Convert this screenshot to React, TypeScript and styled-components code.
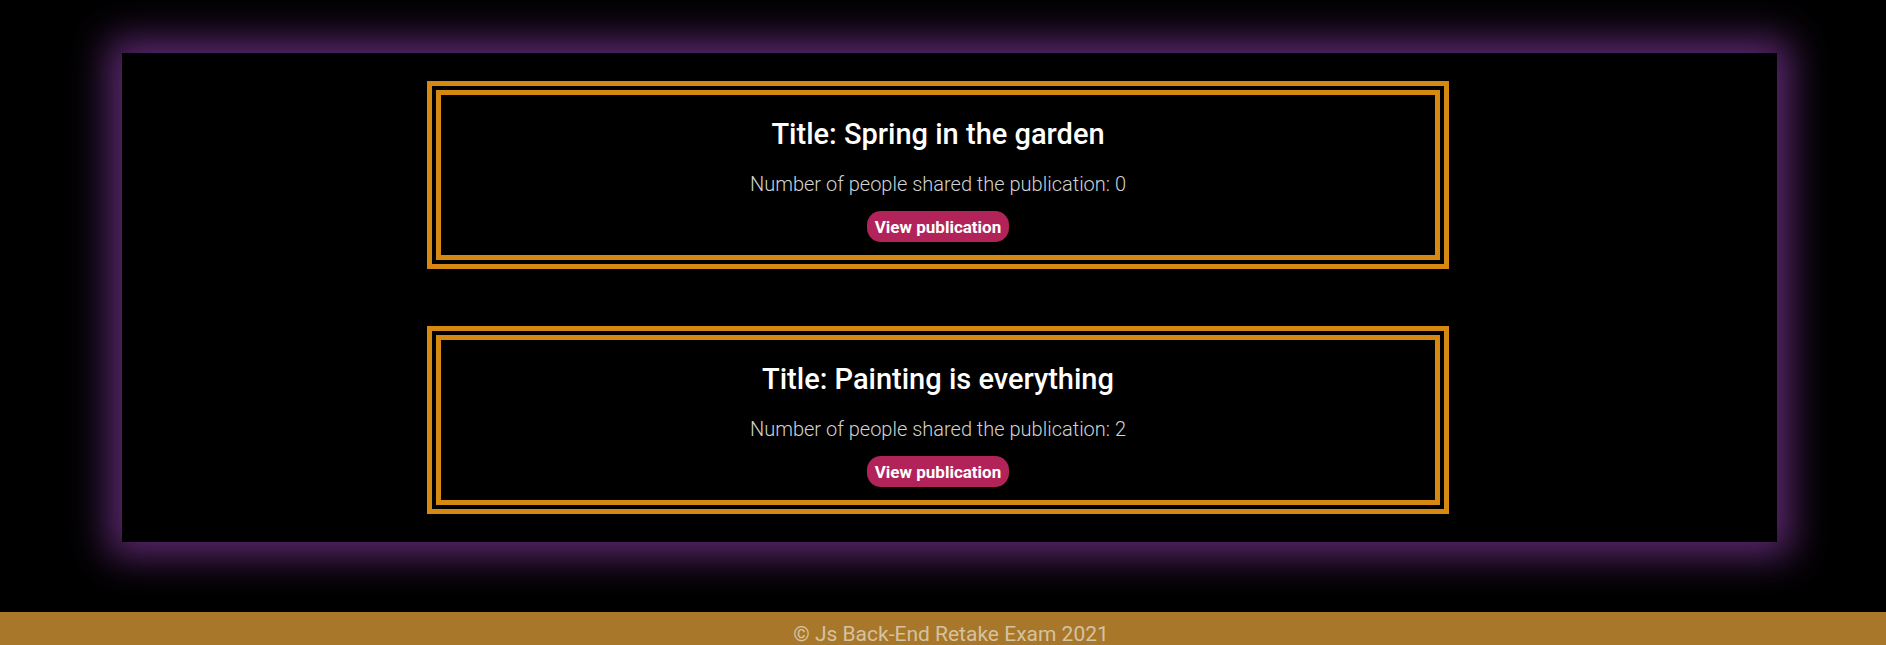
import { FC } from 'react'
import styled, { createGlobalStyle } from 'styled-components'

const publications = [
  { id: 1, title: 'Spring in the garden', shared: 0 },
  { id: 2, title: 'Painting is everything', shared: 2 },
]

const GlobalStyle = createGlobalStyle`
  html, body {
    margin: 0;
    padding: 0;
    background: #000;
  }
  body {
    font-family: Roboto, 'Liberation Sans', sans-serif;
  }
`

const App: FC = () => {
  return (
    <>
      <GlobalStyle />
      <Page>
        <Main>
          {publications.map((p) => (
            <Card key={p.id}>
              <Title>Title: {p.title}</Title>
              <Shared>Number of people shared the publication: {p.shared}</Shared>
              <ViewButton href="#">View publication</ViewButton>
            </Card>
          ))}
        </Main>
        <Footer>© Js Back-End Retake Exam 2021</Footer>
      </Page>
    </>
  )
}

const Page = styled.div`
  display: flex;
  flex-direction: column;
  padding-top: 53px;
  background: #000;
`

const Main = styled.main`
  display: flex;
  flex-direction: column;
  gap: 57px;
  box-sizing: border-box;
  width: 1655px;
  margin-left: 122px;
  padding: 28px 0 28px 305px;
  background: #000;
  box-shadow: 0 0 36px 14px #5c2870;
`

const Card = styled.article`
  display: flex;
  flex-direction: column;
  align-items: center;
  box-sizing: border-box;
  width: 1022px;
  height: 188px;
  border: 14px double #d68910;
`

const Title = styled.h2`
  margin: 22px 0 0;
  font-size: 29px;
  line-height: 34px;
  font-weight: 500;
  color: #fff;
`

const Shared = styled.p`
  margin: 21px 0 0;
  font-size: 20px;
  line-height: 24px;
  font-weight: 300;
  color: #d2d2d2;
`

const ViewButton = styled.a`
  display: inline-flex;
  align-items: center;
  justify-content: center;
  box-sizing: border-box;
  margin-top: 15px;
  height: 31px;
  padding: 0 8px;
  border-radius: 14px;
  background: #b2235a;
  color: #fff;
  font-size: 17px;
  font-weight: 700;
  text-decoration: none;
`

const Footer = styled.footer`
  margin-top: 70px;
  height: 60px;
  padding: 8px 0 0 16px;
  box-sizing: border-box;
  background: #a8772a;
  color: #d3c3a0;
  text-align: center;
  font-size: 21px;
  line-height: 28px;
`

export default App
